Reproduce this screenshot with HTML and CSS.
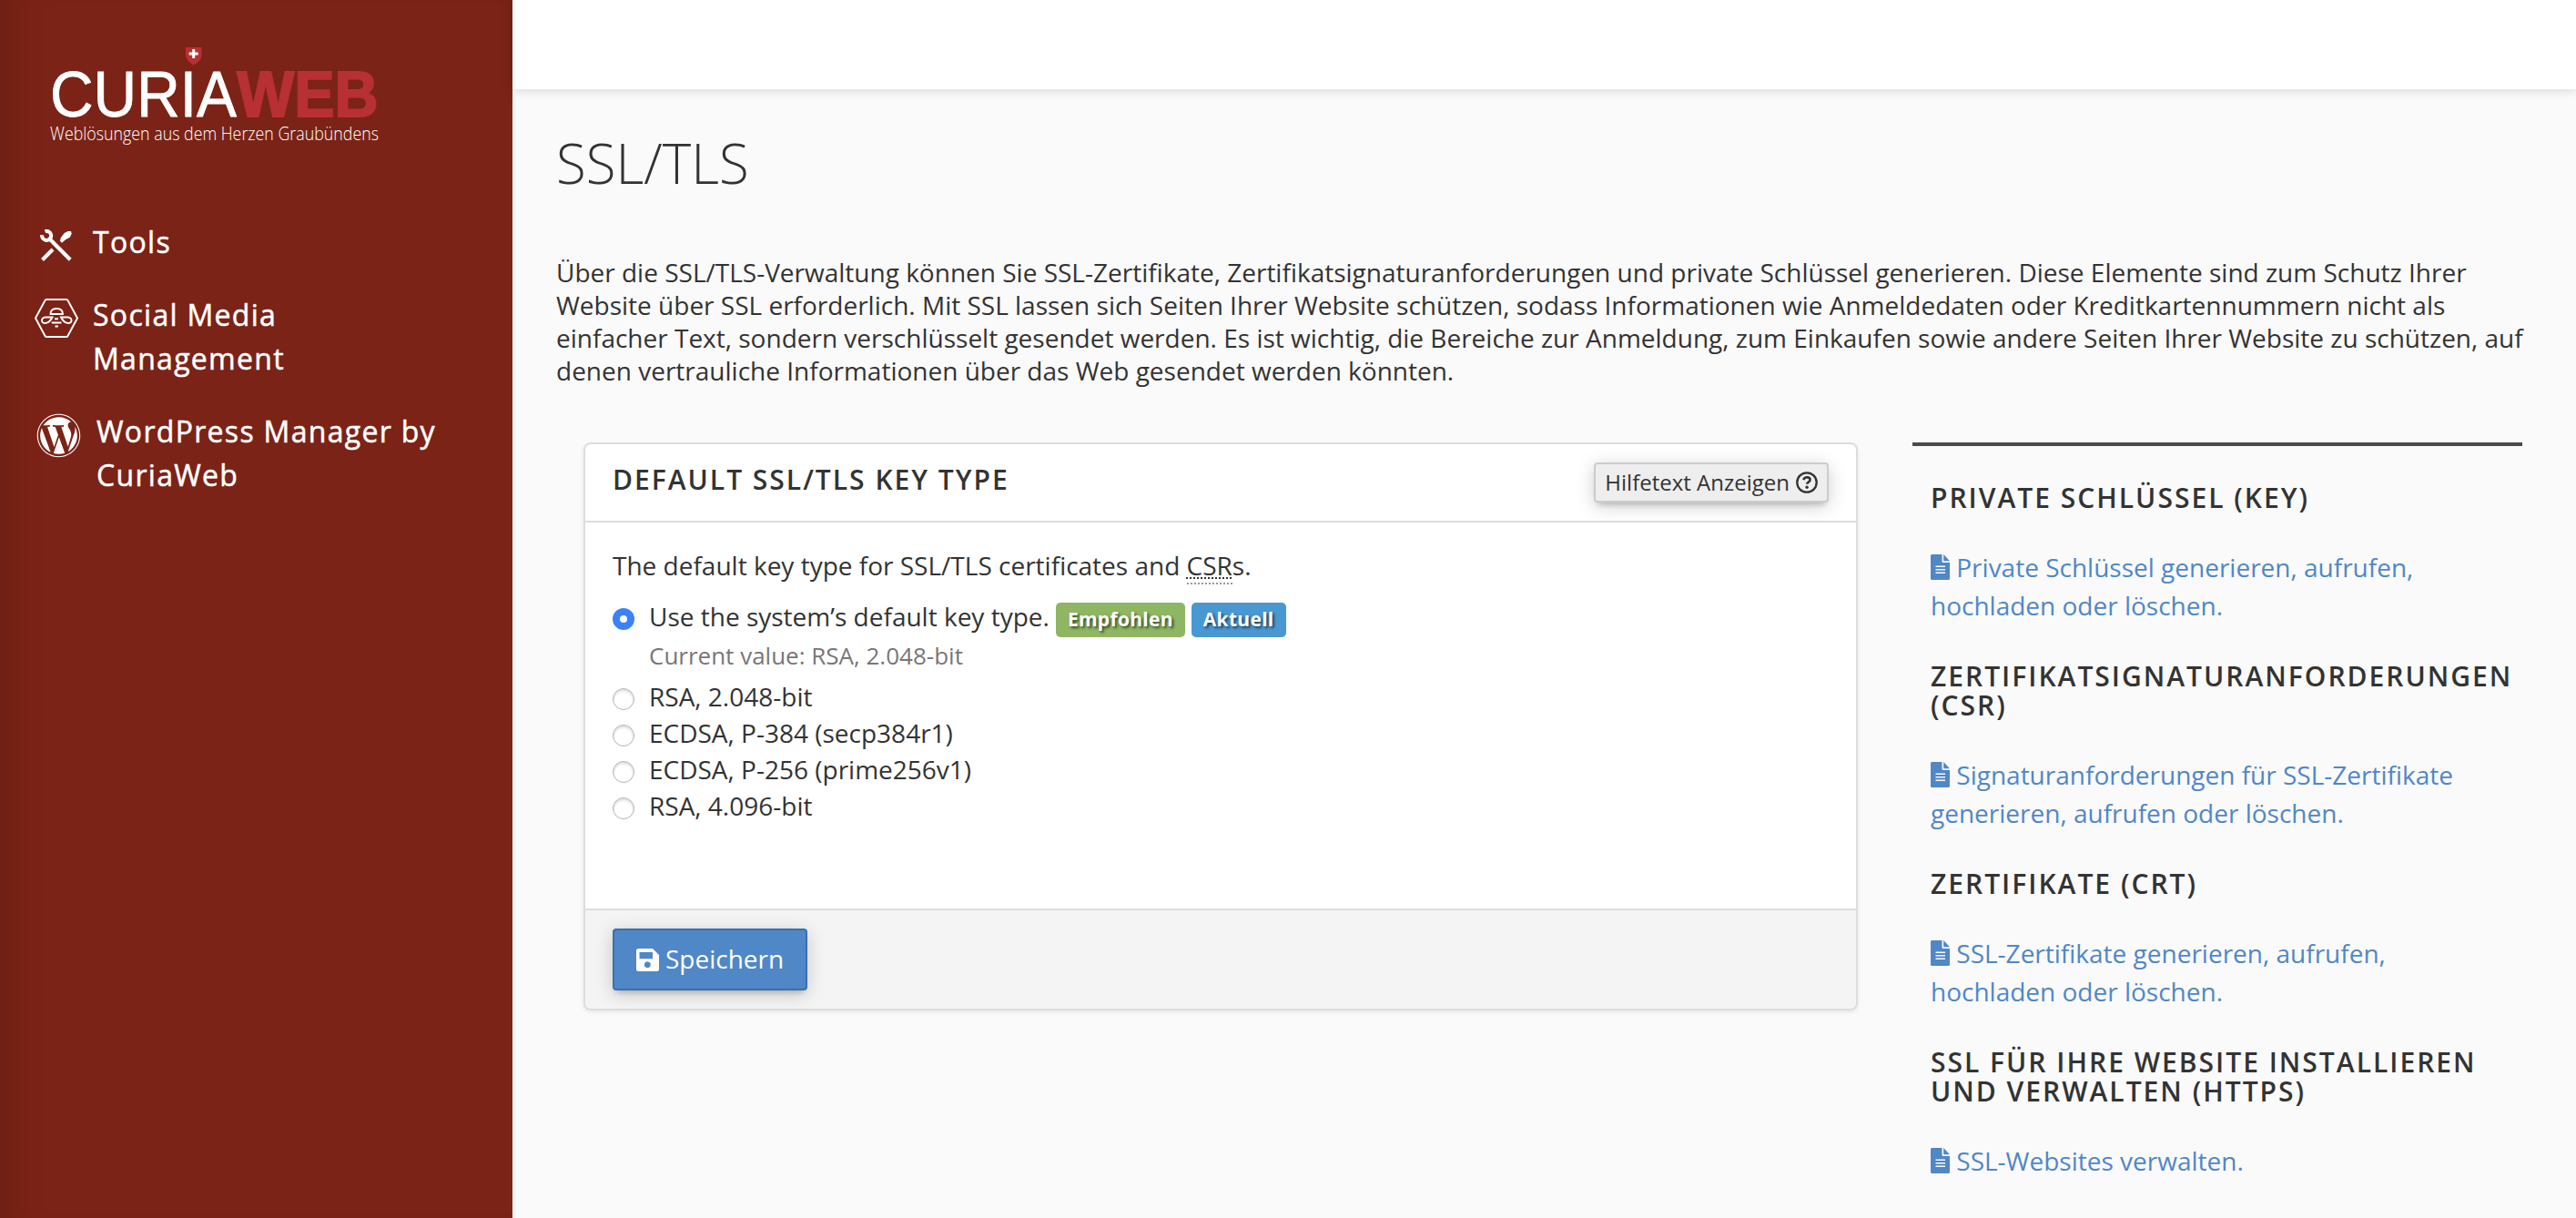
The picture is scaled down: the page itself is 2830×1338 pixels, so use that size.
FILE: index.html
```html
<!DOCTYPE html>
<html lang="de">
<head>
    <meta charset="UTF-8">
    <meta name="viewport" content="width=device-width, initial-scale=1.0">
    <title>SSL/TLS</title>
    <link rel="stylesheet" href="styles.css">
</head>
<body>
    <svg class="sprite" aria-hidden="true">
        <symbol id="icon-file" viewBox="0 0 21 28">
            <path d="M1.5 0H12.500v7.500c0 .8.6 1.500 1.500 1.500h7v17.500c0 .8-.7 1.500-1.500 1.500h-18C.7 28 0 27.300 0 26.500v-25C0 .7.700 0 1.500 0zM5.500 12.500v1.500h10.500v-1.500zm0 3.500v1.500h10.500V16zm0 3.500v1.500h10.500v-1.500zM14.200 0L21 7.200h-6.800z" fill="currentColor" fill-rule="evenodd"/>
        </symbol>
    </svg>

    <aside class="sidebar">
        <a class="logo" href="#">
            <svg width="370" height="120" viewBox="0 0 370 120">
                <path d="M154 4h17.500v8c0 5-4 9-8.800 11.500-4.700-2.500-8.700-6.500-8.700-11.500z" fill="#b83034"/>
                <path d="M161.200 6h3v3.500h3.500v3h-3.500V16h-3v-3.500h-3.500v-3h3.500z" fill="#fff"/>
                <text class="logo-light" x="5" y="79.500" textLength="205" lengthAdjust="spacingAndGlyphs">CURIA</text>
                <text class="logo-bold" x="210.500" y="79.500" textLength="155" lengthAdjust="spacingAndGlyphs">WEB</text>
                <text class="logo-claim" x="5" y="105.500" textLength="361" lengthAdjust="spacingAndGlyphs">Weblösungen aus dem Herzen Graubündens</text>
            </svg>
        </a>
        <nav class="menu">
            <a class="menu-item" href="#">
                <svg class="icon-tools" width="36" height="36" viewBox="0 0 36 36">
                    <path d="M5.500 2.200a5 5 0 0 1 6.400 6.300 5 5 0 0 1-9.700-2.300" fill="none" stroke="#fff" stroke-width="4"/>
                    <path d="M10.500 10.500L33.200 33.200M14 22L2.500 33.500" stroke="#fff" stroke-width="4.200"/>
                    <path d="M22.700 9.300L26.700 4l4-2H34l.7 2.700-2 4-4.700 2.600-4 3.400-2-2z" fill="#fff"/>
                </svg>
                <span>Tools</span>
            </a>
            <a class="menu-item" href="#">
                <svg class="icon-social" width="48" height="43" viewBox="0 0 48 43" fill="none" stroke="#fff" stroke-width="1.900">
                    <path d="M13 1h22q1 0 1.500 1L47 21.500 36.500 41q-.5 1-1.500 1H13q-1 0-1.500-1L1 21.500 11.500 2q.5-1 1.500-1z"/>
                    <path d="M17.500 17q0-6 6.700-6t6.700 6z"/>
                    <path d="M19.500 20.500H12q-4 .5-4 3.500t4 3q4.500-.5 7.500-6.500zM29 20.500h7.500q4 .5 4 3.500t-4 3Q32 26.500 29 20.500z"/>
                    <path d="M22 22.300h4M18.700 26.500h10.800M22.500 30.500h3.400"/>
                </svg>
                <span>Social Media Management</span>
            </a>
            <a class="menu-item" href="#">
                <svg class="icon-wp" width="49" height="49" viewBox="0 0 512 512" fill="#fff">
                    <path d="M61.700 169.400l101.500 278C92.200 413 43.300 340.200 43.300 256c0-30.900 6.600-60.100 18.400-86.600zm337.900 75.900c0-26.300-9.400-44.500-17.500-58.700-10.800-17.500-20.900-32.400-20.900-49.900 0-19.600 14.800-37.800 35.700-37.800.9 0 1.800.1 2.800.2-37.900-34.700-88.300-55.900-143.700-55.900-74.300 0-139.700 38.100-177.800 95.900 5 .2 9.700.3 13.700.3 22.200 0 56.700-2.700 56.700-2.700 11.500-.7 12.800 16.200 1.400 17.500 0 0-11.500 1.300-24.300 2l77.500 230.400L249.800 247l-33.100-90.800c-11.500-.7-22.300-2-22.300-2-11.500-.7-10.100-18.200 1.300-17.500 0 0 35.100 2.700 56 2.700 22.200 0 56.700-2.700 56.700-2.700 11.500-.7 12.800 16.200 1.400 17.500 0 0-11.500 1.300-24.300 2l76.900 228.700 21.200-70.900c9-29.400 16-50.500 16-68.700zm-139.900 29.300l-63.800 185.500c19.100 5.600 39.200 8.700 60.100 8.700 24.800 0 48.500-4.300 70.600-12.100-.6-.9-1.100-1.900-1.500-2.900l-65.400-179.200zm183-120.700c.9 6.800 1.400 14 1.400 21.900 0 21.600-4 45.800-16.200 76.200l-65 187.900C426.200 403 468.700 334.500 468.700 256c0-37-9.400-71.800-26-102.100zM504 256c0 136.800-111.300 248-248 248C119.200 504 8 392.700 8 256 8 119.200 119.200 8 256 8c136.700 0 248 111.200 248 248zm-11.400 0c0-130.500-106.200-236.600-236.600-236.600C125.500 19.400 19.400 125.500 19.400 256S125.600 492.600 256 492.600c130.500 0 236.600-106.100 236.600-236.600z"/>
                </svg>
                <span>WordPress Manager by CuriaWeb</span>
            </a>
        </nav>
    </aside>

    <div class="page">
        <header class="topbar"></header>
        <main class="content">
            <h1>SSL/TLS</h1>
            <p class="intro">Über die SSL/TLS-Verwaltung können Sie SSL-Zertifikate, Zertifikatsignaturanforderungen und private Schlüssel generieren. Diese Elemente sind zum Schutz Ihrer Website über SSL erforderlich. Mit SSL lassen sich Seiten Ihrer Website schützen, sodass Informationen wie Anmeldedaten oder Kreditkartennummern nicht als einfacher Text, sondern verschlüsselt gesendet werden. Es ist wichtig, die Bereiche zur Anmeldung, zum Einkaufen sowie andere Seiten Ihrer Website zu schützen, auf denen vertrauliche Informationen über das Web gesendet werden könnten.</p>

            <div class="columns">
                <section class="panel">
                    <div class="panel-header">
                        <h2>Default SSL/TLS Key Type</h2>
                        <button class="help-button"><span>Hilfetext Anzeigen</span>
                            <svg width="24" height="24" viewBox="0 0 24 24">
                                <circle cx="12" cy="12" r="10.700" fill="none" stroke="currentColor" stroke-width="2.300"/>
                                <path d="M8.300 9.200q1-2.900 3.900-2.900 3.300.1 3.400 2.800 0 1.500-1.800 2.500-1.600.9-1.600 2.200" fill="none" stroke="currentColor" stroke-width="2.600"/>
                                <circle cx="12.100" cy="17.200" r="1.700" fill="currentColor"/>
                            </svg>
                        </button>
                    </div>
                    <div class="panel-body">
                        <p>The default key type for SSL/TLS certificates and <abbr>CSR</abbr>s.</p>
                        <label class="option"><input type="radio" name="keytype" checked>Use the system’s default key type. <span class="badge badge-green">Empfohlen</span> <span class="badge badge-blue">Aktuell</span></label>
                        <div class="current">Current value: RSA, 2.048-bit</div>
                        <label class="option"><input type="radio" name="keytype">RSA, 2.048-bit</label>
                        <label class="option"><input type="radio" name="keytype">ECDSA, P-384 (secp384r1)</label>
                        <label class="option"><input type="radio" name="keytype">ECDSA, P-256 (prime256v1)</label>
                        <label class="option"><input type="radio" name="keytype">RSA, 4.096-bit</label>
                    </div>
                    <div class="panel-footer">
                        <button class="save-button">
                            <svg width="25" height="25" viewBox="0 0 25 25">
                                <path d="M2.500 0H18l7 7v15.500q0 2.500-2.500 2.500h-20Q0 25 0 22.500v-20Q0 0 2.500 0zM3.500 4v7.200H18V4zM12.300 14.200a3.500 3.500 0 1 0 .01 0z" fill="#fff" fill-rule="evenodd"/>
                            </svg>
                            <span>Speichern</span>
                        </button>
                    </div>
                </section>

                <aside class="links">
                    <h2>Private Schlüssel (KEY)</h2>
                    <a href="#"><svg><use href="#icon-file"/></svg> Private Schlüssel generieren, aufrufen, hochladen oder löschen.</a>
                    <h2>Zertifikatsignaturanforderungen (CSR)</h2>
                    <a href="#"><svg><use href="#icon-file"/></svg> Signaturanforderungen für SSL-Zertifikate generieren, aufrufen oder löschen.</a>
                    <h2>Zertifikate (CRT)</h2>
                    <a href="#"><svg><use href="#icon-file"/></svg> SSL-Zertifikate generieren, aufrufen, hochladen oder löschen.</a>
                    <h2>SSL für Ihre Website installieren und verwalten (HTTPS)</h2>
                    <a href="#"><svg><use href="#icon-file"/></svg> SSL-Websites verwalten.</a>
                </aside>
            </div>
        </main>
    </div>
</body>
</html>
```
FILE: styles.css
```css
* {
    box-sizing: border-box;
}
body {
    margin: 0;
    height: 1338px;
    display: flex;
    overflow: hidden;
    background: #fafafa;
    color: #333;
    font-family: 'Open Sans', sans-serif;
    font-size: 28px;
}
h1, h2, p {
    margin: 0;
}
a {
    text-decoration: none;
}
button {
    font-family: inherit;
    cursor: pointer;
}
.sprite {
    position: absolute;
    width: 0;
    height: 0;
}

/* Sidebar */
.sidebar {
    width: 563px;
    flex-shrink: 0;
    padding: 48px 30px 0 38px;
    background: #7b2316;
    box-shadow: inset 40px 0 40px -30px rgba(0, 0, 0, 0.12);
}
.logo {
    display: block;
    height: 194px;
    padding-left: 12px;
}
.logo svg {
    overflow: visible;
}
.logo svg text {
    font-family: 'Liberation Sans', Arial, sans-serif;
    fill: #fff;
}
.logo-light {
    font-size: 70px;
    stroke: #fff;
    stroke-width: 0.8px;
}
.logo svg .logo-bold {
    font-size: 70px;
    font-weight: bold;
    fill: #b83034;
    stroke: #b83034;
    stroke-width: 2px;
}
.logo svg .logo-claim {
    font-family: 'Open Sans', sans-serif;
    font-size: 20.5px;
    font-weight: 300;
}
.menu-item {
    display: flex;
    align-items: flex-start;
    width: 450px;
    margin-bottom: 32px;
    color: #fff;
    font-size: 32px;
    line-height: 48px;
    letter-spacing: 1.3px;
    -webkit-text-stroke: 0.5px #fff;
}
.menu-item:nth-child(2) {
    width: 300px;
}
.menu-item svg {
    flex-shrink: 0;
}
.icon-tools {
    margin: 10px 22px 0 6px;
}
.icon-social {
    margin: 6px 16px 0 0;
}
.icon-wp {
    margin: 4px 17px 0 2px;
}

/* Main area */
.page {
    flex: 1;
}
.topbar {
    height: 98px;
    background: #fff;
    box-shadow: 0 0 12px rgba(0, 0, 0, 0.18);
}
.content {
    padding: 48px 50px 0 48px;
}
h1 {
    font-size: 60px;
    font-weight: 300;
    line-height: 66px;
}
.intro {
    margin-top: 69px;
    line-height: 36px;
}
.columns {
    display: flex;
    align-items: flex-start;
    gap: 60px;
    margin: 61px 0 0 30px;
}
h2 {
    font-size: 30px;
    font-weight: 600;
    letter-spacing: 2px;
    line-height: 32px;
    text-transform: uppercase;
}

/* Key type panel */
.panel {
    width: 1400px;
    background: #fff;
    border: 2px solid #ddd;
    border-radius: 8px;
    box-shadow: 0 2px 4px rgba(0, 0, 0, 0.08);
}
.panel-header {
    display: flex;
    justify-content: space-between;
    align-items: center;
    height: 86px;
    padding: 0 30px;
    border-bottom: 2px solid #ddd;
}
.panel-header h2 {
    padding-bottom: 7px;
}
.help-button {
    display: flex;
    align-items: center;
    gap: 7px;
    height: 44px;
    padding: 0 10px;
    background: #eee;
    border: 2px solid #ccc;
    border-radius: 4px;
    box-shadow: 0 4px 20px rgba(0, 0, 0, 0.19), 0 6px 6px -4px rgba(0, 0, 0, 0.2);
    color: #333;
    font-size: 24px;
}
.help-button span, .save-button span {
    padding-bottom: 2px;
}
.panel-body {
    height: 424px;
    padding: 27px 30px 0;
    line-height: 40px;
}
.panel-body p {
    margin-bottom: 16px;
}
abbr {
    border-bottom: 2px dotted #999;
    text-decoration: underline dotted #333 2px;
    text-underline-offset: 2px;
}
.option {
    display: flex;
    height: 40px;
}
.option input {
    appearance: none;
    width: 24px;
    height: 24px;
    margin: 11px 16px 0 0;
    border: 1px solid #b4b4b4;
    border-radius: 50%;
    background: #fff;
    box-shadow: inset 0 2px 3px rgba(0, 0, 0, 0.15);
}
.option input:checked {
    border: 8px solid #3b82f7;
    box-shadow: none;
}
.badge {
    height: 38px;
    margin: 5px 0 0 7px;
    padding: 0 13px;
    border-radius: 5px;
    color: #fff;
    font-size: 21px;
    font-weight: 700;
    line-height: 36px;
    letter-spacing: 0.3px;
    text-shadow: 2px 2px 3px rgba(0, 0, 0, 0.6);
}
.badge-green {
    background: #8fb663;
}
.badge-blue {
    background: #4a98d2;
}
.current {
    padding: 4px 0 5px 40px;
    color: #777;
    font-size: 26px;
    line-height: 39px;
}
.panel-footer {
    height: 110px;
    padding: 20px 30px;
    background: #f4f4f4;
    border-top: 2px solid #ddd;
    border-radius: 0 0 6px 6px;
}
.save-button {
    display: flex;
    align-items: center;
    gap: 7px;
    height: 68px;
    padding: 0 24px;
    background: #5087c7;
    border: 2px solid #3a70b0;
    border-radius: 4px;
    box-shadow: 0 4px 20px rgba(0, 0, 0, 0.19), 0 6px 6px -4px rgba(0, 0, 0, 0.2);
    color: #fff;
    font-size: 28px;
}

/* Right column */
.links {
    width: 670px;
    padding: 41px 0 0 20px;
    border-top: 4px solid #4a4a4a;
}
.links a {
    display: block;
    width: 600px;
    margin: 39px 0 41px;
    color: #5087c7;
    line-height: 42px;
}
.links a svg {
    width: 21px;
    height: 28px;
    vertical-align: -3px;
}
```
